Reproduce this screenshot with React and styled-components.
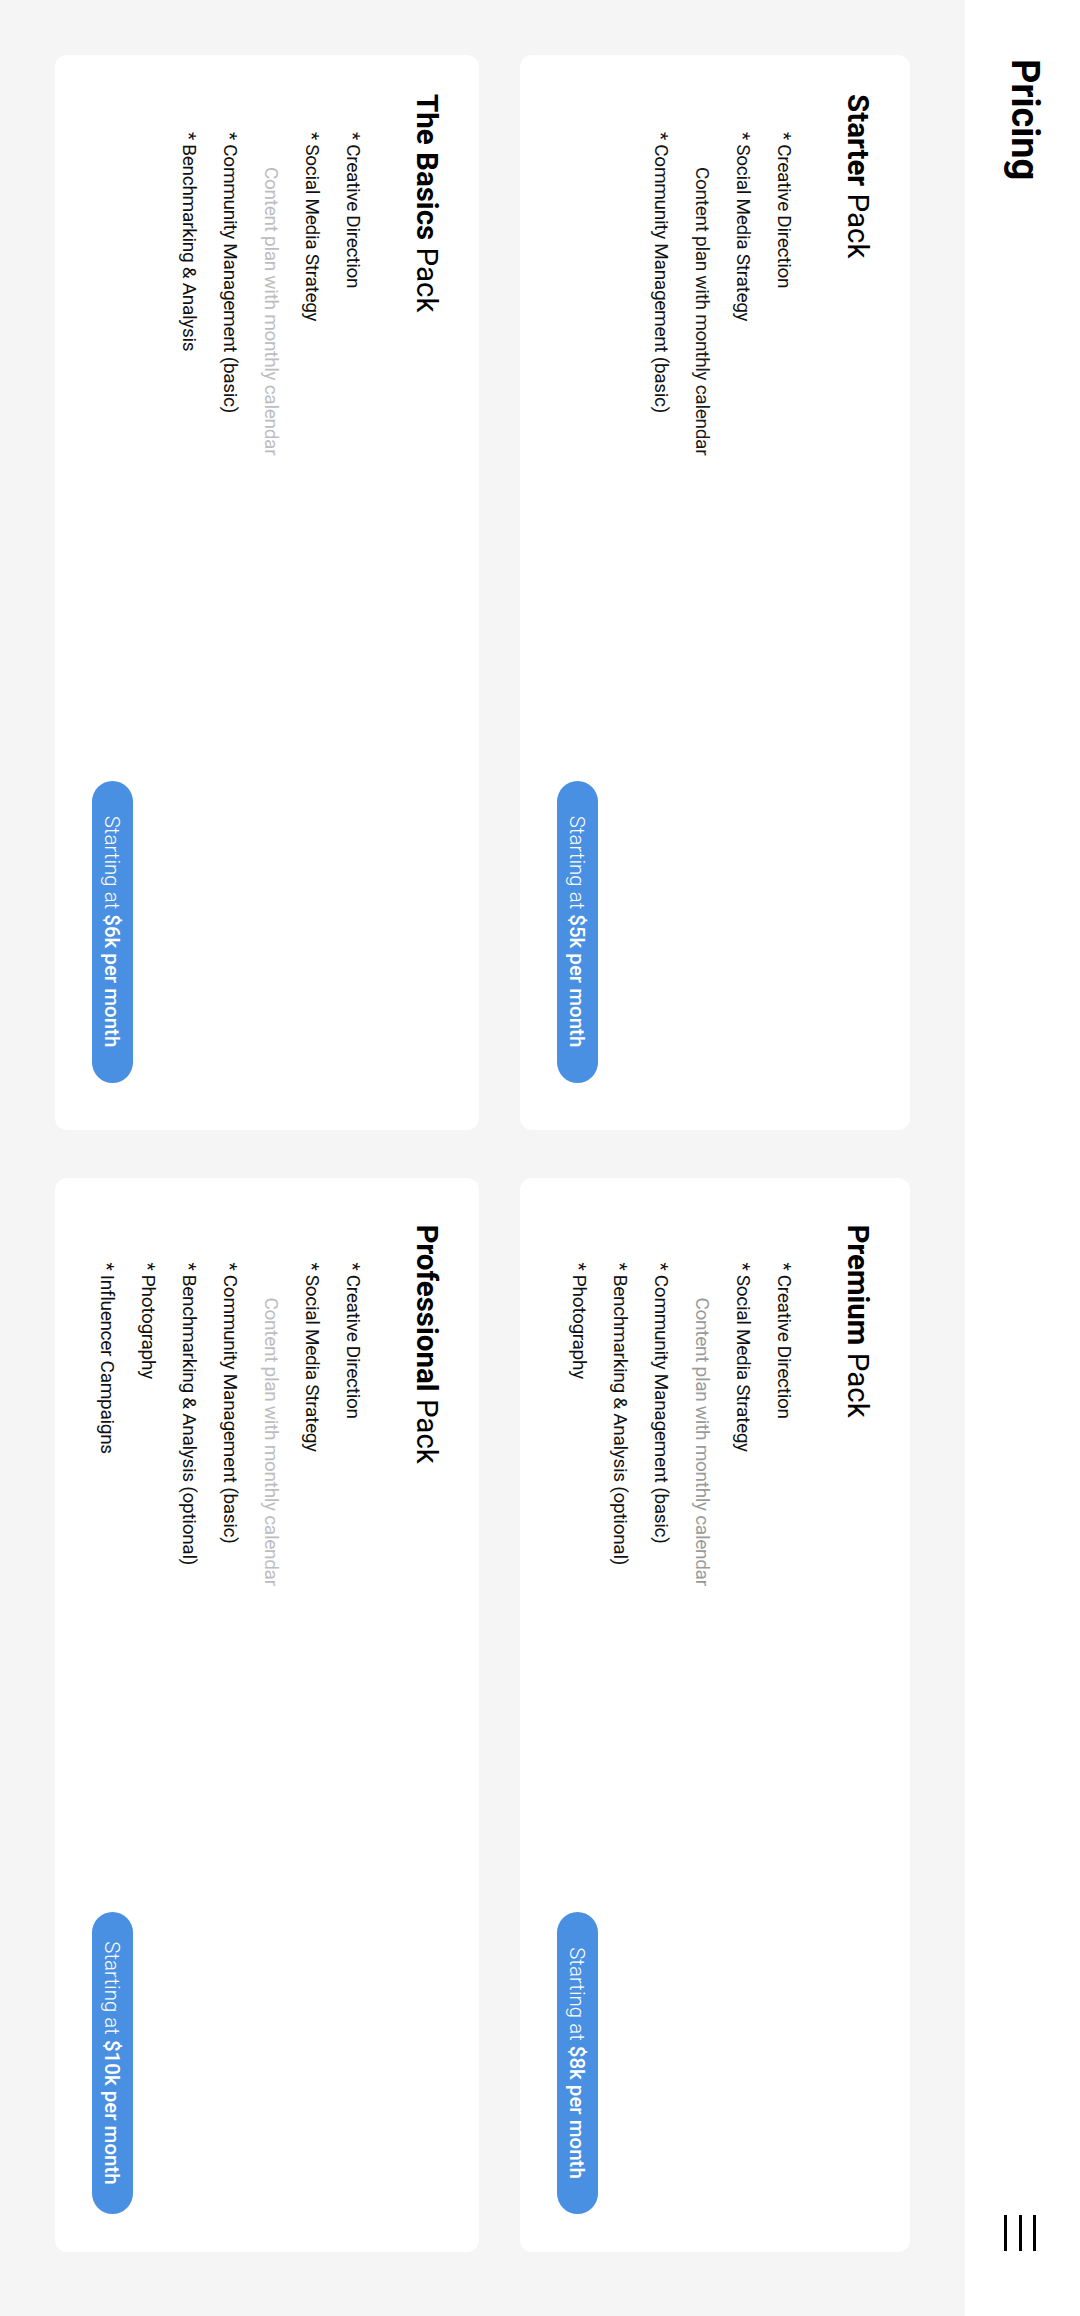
import React from 'react';
import styled, { createGlobalStyle } from 'styled-components';

const packs = [
  {
    id: 'starter',
    name: 'Starter',
    price: '$5k',
    features: [
      { text: 'Creative Direction' },
      { text: 'Social Media Strategy' },
      { text: 'Content plan with monthly calendar', sub: true, tone: '#1a1a1a' },
      { text: 'Community Management (basic)' },
    ],
  },
  {
    id: 'premium',
    name: 'Premium',
    price: '$8k',
    features: [
      { text: 'Creative Direction' },
      { text: 'Social Media Strategy' },
      { text: 'Content plan with monthly calendar', sub: true, tone: '#9a9a9a' },
      { text: 'Community Management (basic)' },
      { text: 'Benchmarking & Analysis (optional)' },
      { text: 'Photography' },
    ],
  },
  {
    id: 'basics',
    name: 'The Basics',
    price: '$6k',
    features: [
      { text: 'Creative Direction' },
      { text: 'Social Media Strategy' },
      { text: 'Content plan with monthly calendar', sub: true, tone: '#bdbdbd' },
      { text: 'Community Management (basic)' },
      { text: 'Benchmarking & Analysis' },
    ],
  },
  {
    id: 'professional',
    name: 'Professional',
    price: '$10k',
    features: [
      { text: 'Creative Direction' },
      { text: 'Social Media Strategy' },
      { text: 'Content plan with monthly calendar', sub: true, tone: '#bdbdbd' },
      { text: 'Community Management (basic)' },
      { text: 'Benchmarking & Analysis (optional)' },
      { text: 'Photography' },
      { text: 'Influencer Campaigns' },
    ],
  },
];

const Pricing = () => {
  return (
    <>
      <GlobalStyle />
      <Screen>
        {/* the whole screen is shown turned a quarter clockwise */}
        <Stage>
          <Header>
            <PageTitle>Pricing</PageTitle>
            <MenuButton>
              <MenuBar />
              <MenuBar />
              <MenuBar />
            </MenuButton>
          </Header>
          <Grid>
            {packs.map((pack, i) => {
              const right = i % 2 === 1;
              return (
                <Card key={pack.id} $right={right}>
                  <CardBody>
                    <PackTitle>
                      <b>{pack.name}</b> Pack
                    </PackTitle>
                    <FeatureList>
                      {pack.features.map((f) => (
                        <Feature key={f.text} $sub={f.sub} $tone={f.tone}>
                          {f.sub ? f.text : `* ${f.text}`}
                        </Feature>
                      ))}
                    </FeatureList>
                  </CardBody>
                  <PriceButton>
                    Starting at{' '}<strong>{pack.price} per month</strong>
                  </PriceButton>
                </Card>
              );
            })}
          </Grid>
        </Stage>
      </Screen>
    </>
  );
};

const GlobalStyle = createGlobalStyle`
  html, body {
    margin: 0;
    padding: 0;
    background: #f5f5f5;
  }
  body {
    font-family: 'Roboto', 'Liberation Sans', sans-serif;
  }
  * {
    box-sizing: border-box;
  }
`;

const Screen = styled.div`
  width: 1080px;
  height: 2316px;
  overflow: hidden;
  background: #f5f5f5;
`;

const Stage = styled.div`
  width: 2316px;
  height: 1080px;
  display: flex;
  flex-direction: column;
  background: #f5f5f5;
  transform-origin: 0 0;
  transform: translateX(1080px) rotate(90deg);
`;

const Header = styled.header`
  flex-shrink: 0;
  height: 115px;
  display: flex;
  justify-content: space-between;
  align-items: flex-start;
  padding: 0 65px 0 59px;
  background: #fff;
`;

const PageTitle = styled.h1`
  margin: 36px 0 0;
  font-size: 38px;
  line-height: 38px;
  font-weight: 700;
  color: #000;
`;

const MenuButton = styled.div`
  display: flex;
  flex-direction: column;
  gap: 11.5px;
  width: 36px;
  margin-top: 43.5px;
`;

const MenuBar = styled.span`
  display: block;
  height: 3px;
  background: #000;
`;

const Grid = styled.main`
  flex: 1;
  display: grid;
  grid-template-columns: 1fr 1fr;
  grid-template-rows: 390px 424px;
  column-gap: 48px;
  row-gap: 41px;
  padding: 55px 64px 55px 55px;
`;

const Card = styled.section`
  display: flex;
  justify-content: space-between;
  align-items: flex-end;
  padding: 37px ${(p) => (p.$right ? 38 : 47)}px 37px ${(p) => (p.$right ? 47 : 39)}px;
  border-radius: 12px;
  background: #fff;
`;

const CardBody = styled.div`
  align-self: flex-start;
`;

const PackTitle = styled.h2`
  margin: 0 0 38px;
  font-size: 29.5px;
  line-height: 30px;
  font-weight: 400;
  color: #000;
  b {
    font-weight: 700;
  }
`;

const FeatureList = styled.ul`
  margin: 0;
  padding: 0 0 0 38px;
  list-style: none;
  font-size: 19px;
  line-height: 41px;
  letter-spacing: -0.3px;
`;

const Feature = styled.li`
  padding-left: ${(p) => (p.$sub ? 35 : 0)}px;
  color: ${(p) => p.$tone || '#111'};
  white-space: nowrap;
`;

const PriceButton = styled.div`
  flex-shrink: 0;
  display: flex;
  align-items: center;
  justify-content: center;
  width: 302px;
  height: 41px;
  border-radius: 999px;
  background: #4a90e2;
  color: #fff;
  font-size: 20.5px;
  font-weight: 300;
  white-space: pre;
  strong {
    font-weight: 500;
  }
`;

export default Pricing;
